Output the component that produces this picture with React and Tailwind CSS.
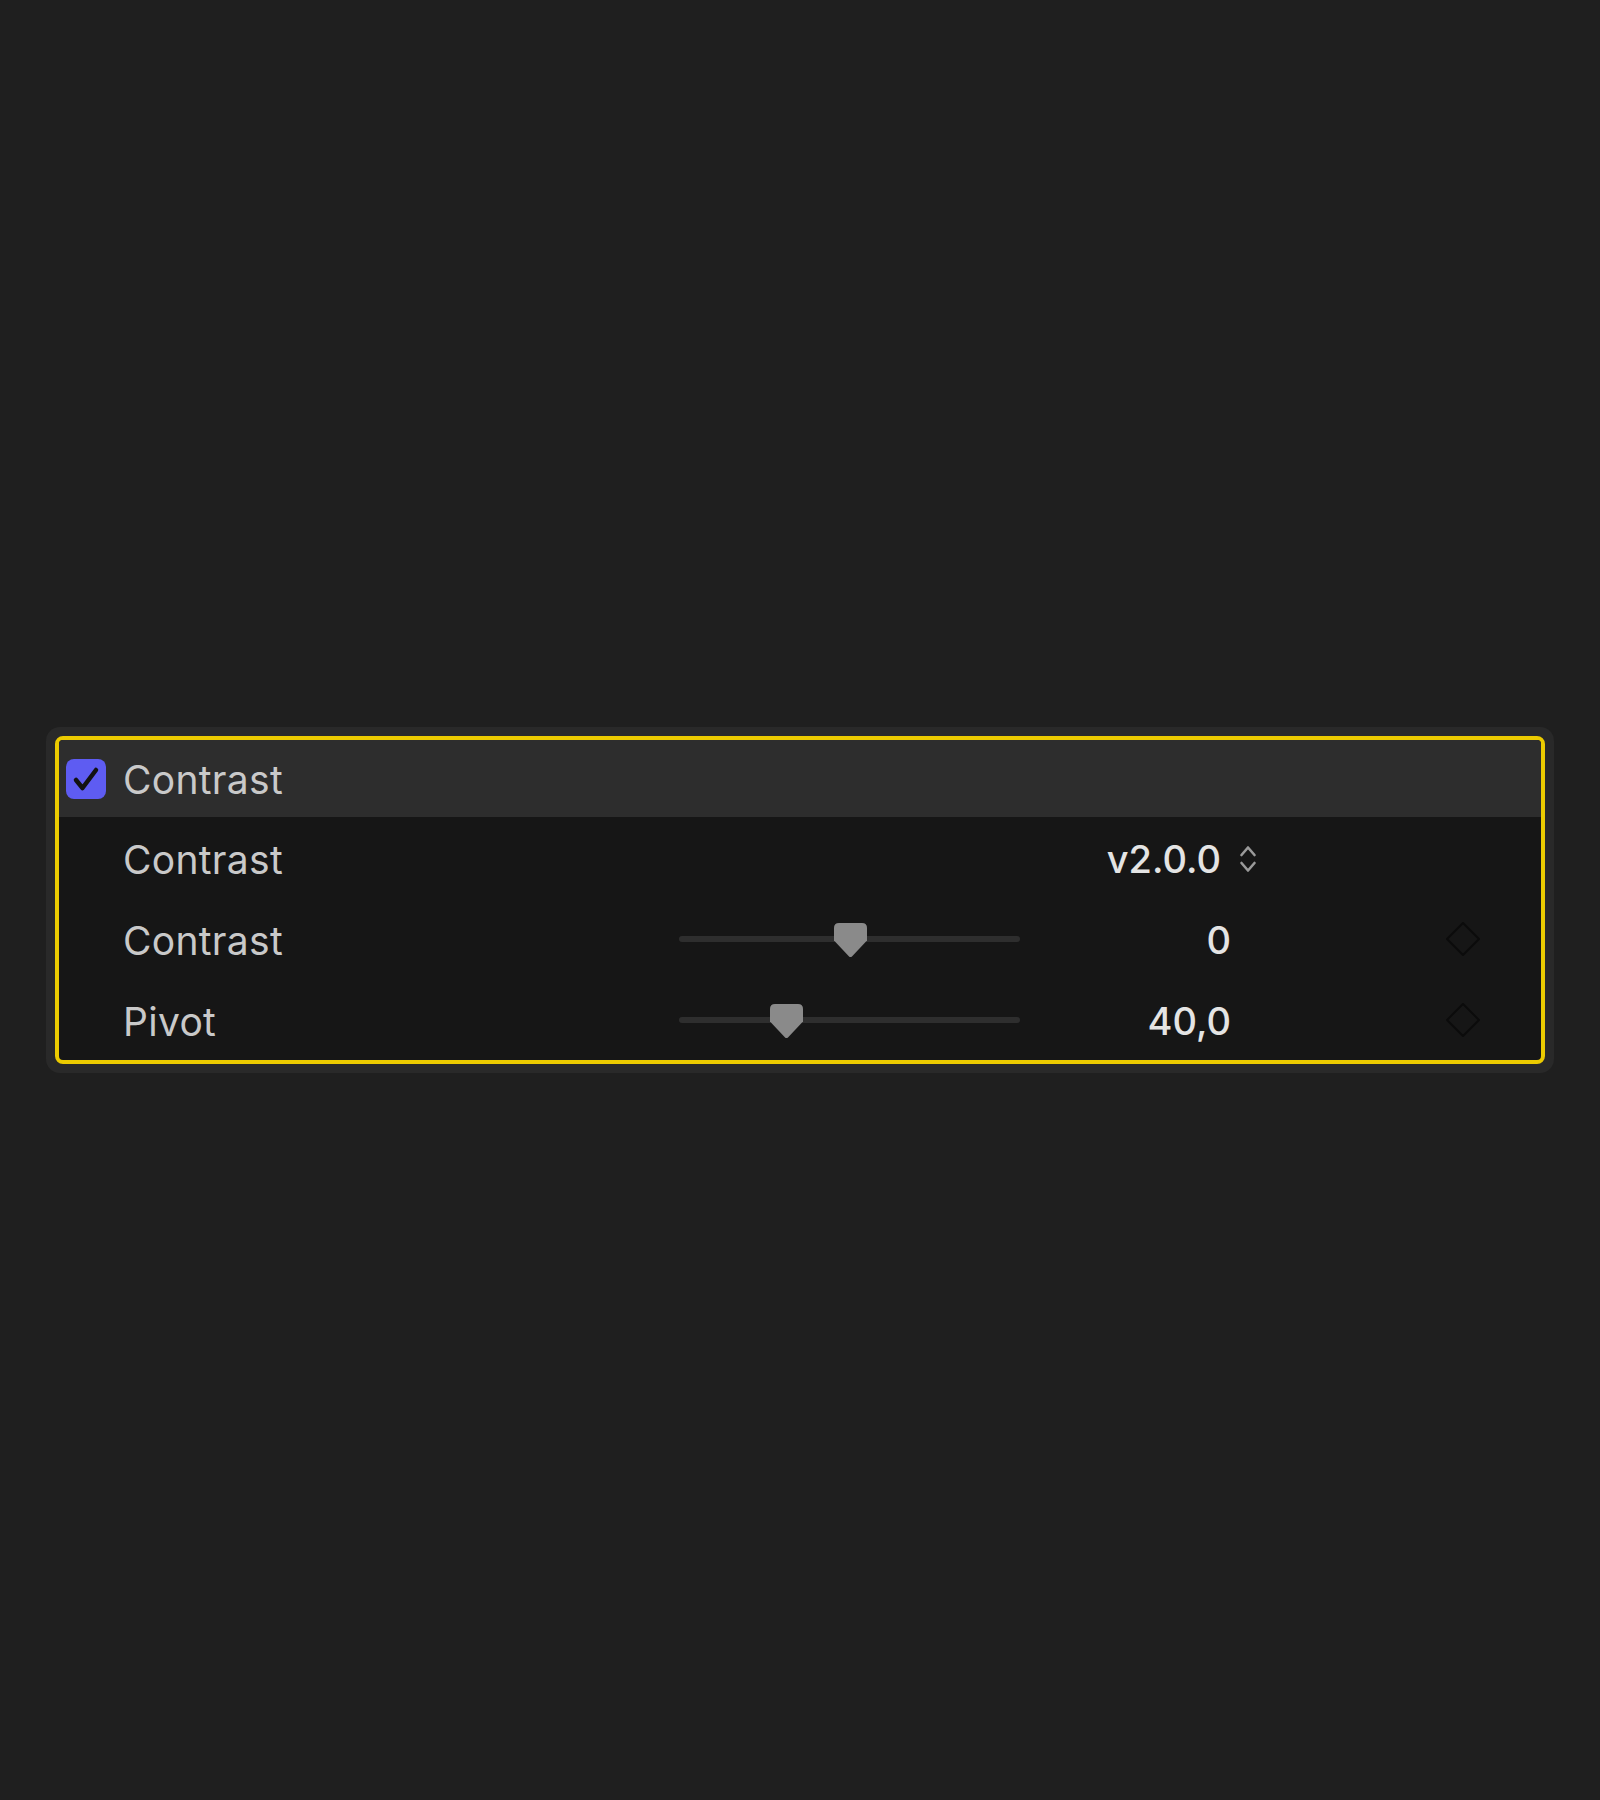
import React from "react";

function Thumb() {
  return (
    <svg width="33" height="35" viewBox="0 0 33 35" className="block">
      <path
        d="M5 0 H28 Q33 0 33 5 V17.5 L18.2 33.2 Q16.5 35 14.8 33.2 L0 17.5 V5 Q0 0 5 0 Z"
        fill="#8a8a8a"
      />
    </svg>
  );
}

function Slider({ left }) {
  return (
    <div className="relative w-[341px] h-[6px] rounded-full bg-[#2e2e2e]">
      <div className="absolute top-[-13px]" style={{ left: `${left}px` }}>
        <Thumb />
      </div>
    </div>
  );
}

function Diamond() {
  return (
    <svg width="36" height="36" viewBox="0 0 36 36" className="block ml-[214px]">
      <polygon points="18,2 34,18 18,34 2,18" fill="none" stroke="#0b0b0b" strokeWidth="2" strokeLinejoin="round" />
    </svg>
  );
}

function Chevrons() {
  return (
    <svg width="18" height="30" viewBox="0 0 18 30" className="block">
      <path d="M2.5 11 L9 3.5 L15.5 11" fill="none" stroke="#9a9a9a" strokeWidth="2.6" strokeLinecap="round" strokeLinejoin="round" />
      <path d="M2.5 19 L9 26.5 L15.5 19" fill="none" stroke="#9a9a9a" strokeWidth="2.6" strokeLinecap="round" strokeLinejoin="round" />
    </svg>
  );
}

export default function App() {
  const font = { fontFamily: "Inter, 'Noto Sans', sans-serif" };
  return (
    <div
      className="min-h-screen w-full bg-[#1f1f1f] flex items-center justify-center"
      style={font}
    >
      <div className="w-[1508px] rounded-[14px] bg-[#292929] p-[9px]">
        <div className="rounded-[8px] border-[4px] border-[#eccb00] bg-[#161616] overflow-hidden">
          {/* Header */}
          <div className="h-[77px] bg-[#2d2d2d] flex items-center pl-[7px]">
            <div className="w-[40px] h-[40px] rounded-[8px] bg-[#5e5cf2] flex items-center justify-center">
              <svg width="40" height="40" viewBox="0 0 40 40" className="block">
                <polyline points="10,21 16.5,29 30,11" fill="none" stroke="#121212" strokeWidth="4.5" strokeLinecap="round" strokeLinejoin="round" />
              </svg>
            </div>
            <span className="ml-[17px] pt-[2px] text-[39px] tracking-[0.3px] leading-none text-[#c9c9c9] font-normal">Contrast</span>
          </div>

          {/* Version row */}
          <div className="h-[81px] flex items-center">
            <div className="w-[620px] pl-[64px] pt-[3px] text-[39px] tracking-[0.3px] leading-none text-[#c9c9c9]">Contrast</div>
            <div className="w-[580px] flex items-center justify-end gap-[18px] pr-[2px] pt-[3px]">
              <span className="text-[38px] leading-none text-[#e4e4e4] font-medium">v2.0.0</span>
              <Chevrons />
            </div>
          </div>

          {/* Contrast slider row */}
          <div className="h-[81px] flex items-center">
            <div className="w-[620px] pl-[64px] pt-[3px] text-[39px] tracking-[0.3px] leading-none text-[#c9c9c9]">Contrast</div>
            <Slider left={155} />
            <div className="w-[211px] pt-[3px] text-right text-[38px] leading-none text-[#e4e4e4] font-medium">0</div>
            <Diamond />
          </div>

          {/* Pivot row */}
          <div className="h-[81px] flex items-center">
            <div className="w-[620px] pl-[64px] pt-[3px] text-[39px] tracking-[0.3px] leading-none text-[#c9c9c9]">Pivot</div>
            <Slider left={91} />
            <div className="w-[211px] pt-[3px] text-right text-[38px] leading-none text-[#e4e4e4] font-medium">40,0</div>
            <Diamond />
          </div>
        </div>
      </div>
    </div>
  );
}
